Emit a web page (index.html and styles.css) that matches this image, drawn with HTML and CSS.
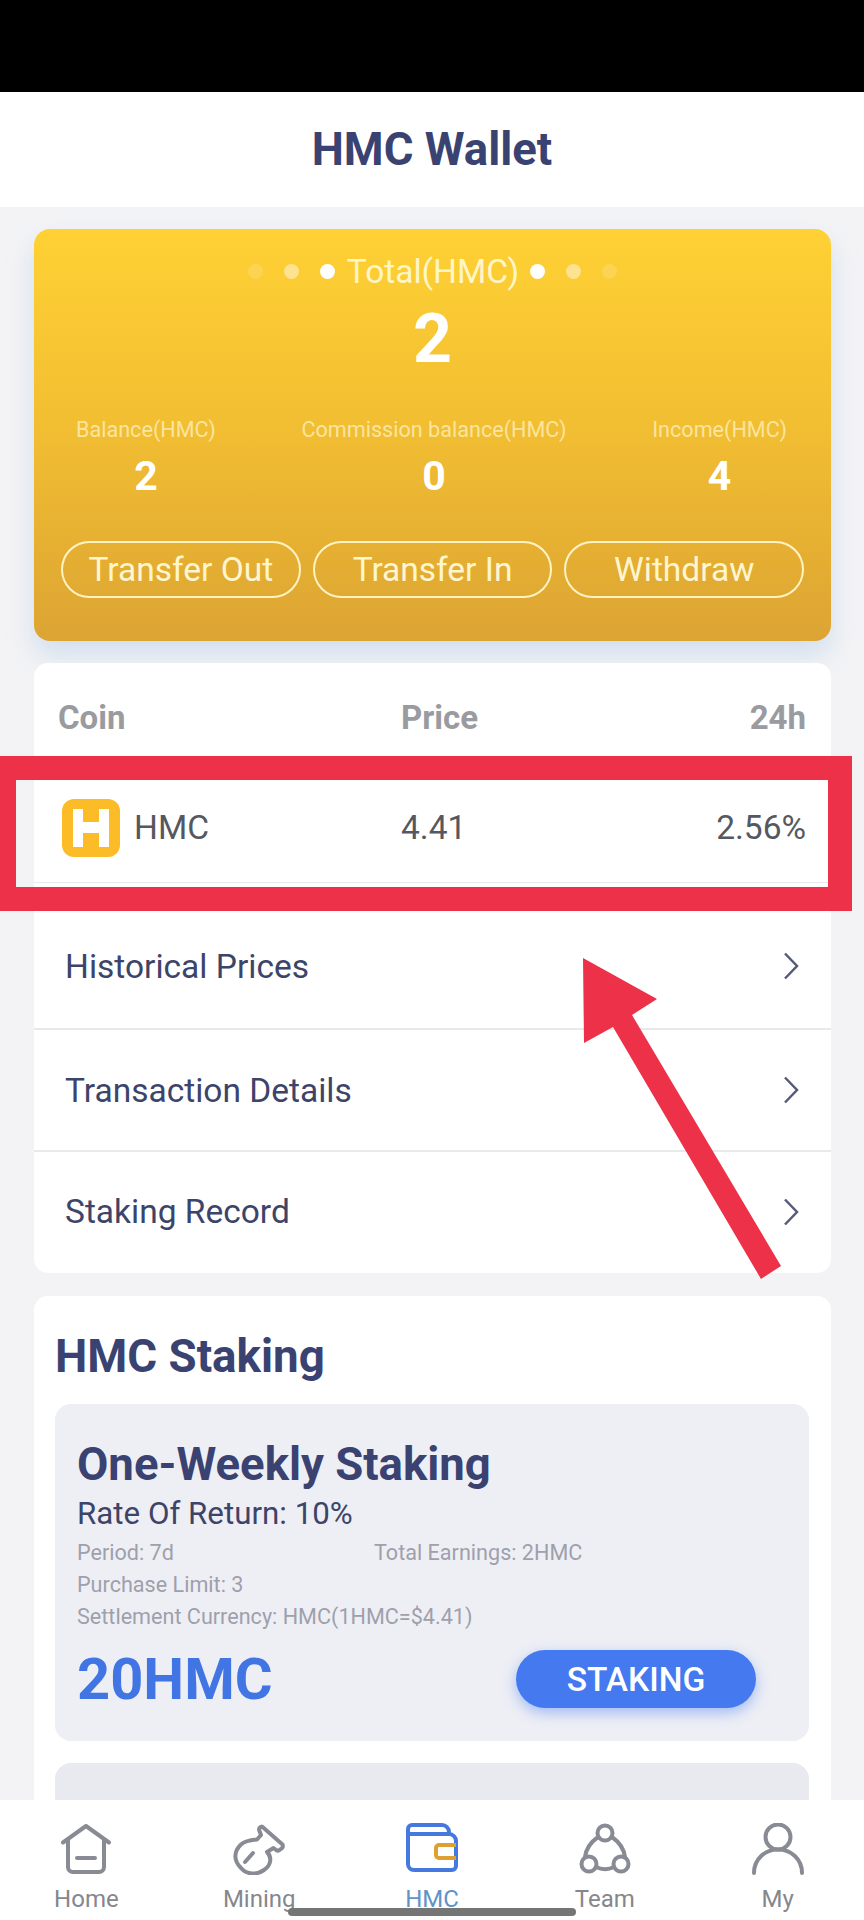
FILE: index.html
```html
<!DOCTYPE html>
<html lang="en">
<head>
<meta charset="utf-8">
<title>HMC Wallet</title>
<link rel="stylesheet" href="styles.css">
</head>
<body>
<div class="app">
  <div class="status"></div>
  <header class="header">HMC Wallet</header>
  <main class="main">
    <section class="gold">
      <div class="total-row">
        <i class="dot d1"></i><i class="dot d2"></i><i class="dot d3"></i>
        <span class="total-label">Total(HMC)</span>
        <i class="dot d3"></i><i class="dot d2"></i><i class="dot d1"></i>
      </div>
      <div class="total-value">2</div>
      <div class="stats">
        <div class="stat"><div class="stat-label">Balance(HMC)</div><div class="stat-value">2</div></div>
        <div class="stat"><div class="stat-label">Commission balance(HMC)</div><div class="stat-value">0</div></div>
        <div class="stat"><div class="stat-label">Income(HMC)</div><div class="stat-value">4</div></div>
      </div>
      <div class="actions">
        <div class="action">Transfer Out</div>
        <div class="action">Transfer In</div>
        <div class="action">Withdraw</div>
      </div>
    </section>

    <section class="card list">
      <div class="coin-head"><span>Coin</span><span>Price</span><span class="right">24h</span></div>
      <div class="coin-row">
        <span class="coin-name">
          <svg class="coin-icon" viewBox="0 0 60 60"><rect x="1" y="1" width="58" height="58" rx="12" fill="#fcbc28"/><path d="M12 11h10v13h16V11h10v38H38V35H22v14H12z" fill="#fff"/></svg>
          HMC
        </span>
        <span>4.41</span>
        <span class="right">2.56%</span>
      </div>
      <div class="menu-row">Historical Prices<svg class="chev" viewBox="0 0 16 28"><path d="M2 1.5 14 14 2 26.500" /></svg></div>
      <div class="menu-row">Transaction Details<svg class="chev" viewBox="0 0 16 28"><path d="M2 1.5 14 14 2 26.500" /></svg></div>
      <div class="menu-row">Staking Record<svg class="chev" viewBox="0 0 16 28"><path d="M2 1.5 14 14 2 26.500" /></svg></div>
    </section>

    <section class="card staking">
      <h2 class="staking-title">HMC Staking</h2>
      <div class="plan">
        <div class="plan-name">One-Weekly Staking</div>
        <div class="plan-rate">Rate Of Return: 10%</div>
        <div class="plan-meta"><span class="meta-cell">Period: 7d</span><span>Total Earnings: 2HMC</span></div>
        <div class="plan-meta">Purchase Limit: 3</div>
        <div class="plan-meta">Settlement Currency: HMC(1HMC=$4.41)</div>
        <div class="plan-foot">
          <span class="plan-price">20HMC</span>
          <span class="stake-btn">STAKING</span>
        </div>
      </div>
      <div class="plan plan-next"></div>
    </section>
  </main>

  <nav class="nav">
    <div class="tab">
      <svg class="tab-icon" viewBox="0 0 52 52"><path class="ln" d="M3 19.500 26 3l23 16.500M8 17v27a5 5 0 0 0 5 5h26a5 5 0 0 0 5-5V17"/><path class="ln" d="M17 35h18"/></svg>
      <span>Home</span>
    </div>
    <div class="tab">
      <svg class="tab-icon" viewBox="0 0 52 52"><path class="ln" d="M29 3.500 49.500 21.500a3 3 0 0 1-1 4l-2 1.500a3 3 0 0 1-4-.5L40.500 25 34 29C39 34 38.500 42 31 47 24 52 14 52 8 45 1 38 0 29 8 21.500 12 18 18 17 24 16.500L28 12 26.500 8a3 3 0 0 1 2.500-4.500z"/><path class="ln" d="M20 30 12 39"/></svg>
      <span>Mining</span>
    </div>
    <div class="tab active">
      <svg class="tab-icon" viewBox="0 0 52 52"><path class="wl" d="M2 14V6a4 4 0 0 1 4-4h30a7 7 0 0 1 7 7v3M2 11h41a7 7 0 0 1 7 7v25a4 4 0 0 1-4 4H8a6 6 0 0 1-6-6z"/><path class="wg" d="M50 22H33a3 3 0 0 0-3 3v7a3 3 0 0 0 3 3h17"/></svg>
      <span>HMC</span>
    </div>
    <div class="tab">
      <svg class="tab-icon" viewBox="0 0 52 52"><circle class="ln" cx="26" cy="10" r="7.500"/><circle class="ln" cx="10" cy="41" r="7.500"/><circle class="ln" cx="42" cy="41" r="7.500"/><path class="ln" d="M19 14C12 19 7 26 6 34M33 14c7 5 12 12 13 20M17 44c6 3 12 3 18 0"/></svg>
      <span>Team</span>
    </div>
    <div class="tab">
      <svg class="tab-icon" viewBox="0 0 52 52"><circle class="ln" cx="26" cy="14" r="12.500"/><path class="ln" d="M2 50C2 36 13 26.500 26 26.500S50 36 50 50"/></svg>
      <span>My</span>
    </div>
    <div class="home-bar"></div>
  </nav>

  <div class="mark-box"></div>
  <svg class="mark-arrow" viewBox="0 0 864 1920"><path d="M583 958 657 999 632 1015 781 1266 761 1279 613 1027 584 1043z" /></svg>
</div>
</body>
</html>
```
FILE: styles.css
```css
* { box-sizing: border-box; }
html, body { margin: 0; padding: 0; }
body { font-family: Roboto, "Liberation Sans", sans-serif; background: #f3f3f5; }

.app {
  position: relative;
  width: 864px;
  height: 1920px;
  overflow: hidden;
  display: flex;
  flex-direction: column;
}

.status { height: 92px; background: #000; flex: none; }

.header {
  flex: none;
  height: 115px;
  background: #fff;
  display: flex;
  align-items: center;
  justify-content: center;
  font-size: 45.500px;
  font-weight: 700;
  color: #3a4272;
}

.main {
  flex: 1;
  min-height: 0;
  overflow: hidden;
  padding: 22px 33px 0 34px;
  display: flex;
  flex-direction: column;
}

.gold {
  flex: none;
  height: 412px;
  border-radius: 16px;
  background: linear-gradient(180deg, #ffd134 0%, #f1bd32 50%, #dca433 100%);
  box-shadow: 0 14px 26px rgba(150, 185, 230, .35);
  padding: 22px 27px 0 27px;
  color: #fff;
}

.total-row {
  display: flex;
  align-items: center;
  justify-content: center;
  height: 40px;
}
.total-label { font-size: 33.500px; color: #fff6c8; margin: 0 11px 0 12px; }
.dot { width: 15px; height: 15px; border-radius: 50%; background: #fff; flex: none; }
.total-row .dot + .dot { margin-left: 21px; }
.d1 { opacity: .15; }
.d2 { opacity: .45; }

.total-value {
  text-align: center;
  font-size: 68px;
  font-weight: 700;
  line-height: 78px;
  margin-top: 9px;
}

.stats {
  display: flex;
  justify-content: space-between;
  margin: 39px 17px 0 15px;
}
.stat { text-align: center; }
.stat-label { font-size: 21.600px; line-height: 26px; color: #fbe59c; }
.stat-value { font-size: 41px; font-weight: 700; line-height: 46px; margin-top: 10px; }

.actions {
  display: flex;
  gap: 12px;
  margin-top: 42px;
}
.action {
  flex: 1;
  height: 57px;
  border: 2.500px solid #fff3c4;
  border-radius: 29px;
  display: flex;
  align-items: center;
  justify-content: center;
  font-size: 33.500px;
  color: #fff6cf;
}

.card { background: #fff; border-radius: 14px; flex: none; }

.list { height: 610px; margin-top: 22px; }

.coin-head, .coin-row {
  display: grid;
  grid-template-columns: 343px 1fr auto;
  padding: 0 25px 0 24px;
  align-items: center;
}
.coin-head {
  height: 106px;
  padding-top: 2px;
  font-size: 33px;
  font-weight: 700;
  color: #999ba0;
}
.coin-row {
  height: 114px;
  padding-top: 4px;
  font-size: 33.500px;
  color: #555860;
  border-bottom: 1px solid #e8e9ed;
}
.right { justify-self: end; }
.coin-name { display: flex; align-items: center; gap: 13px; margin-left: 3px; }
.coin-icon { width: 60px; height: 60px; flex: none; }

.menu-row {
  height: 122px;
  padding: 0 32px 0 31px;
  display: flex;
  align-items: center;
  justify-content: space-between;
  font-size: 33.500px;
  color: #3d4469;
  border-bottom: 2px solid #e8e9ed;
}
.coin-row + .menu-row { height: 147px; padding-top: 21px; }
.menu-row:last-child { height: 121px; padding-bottom: 2px; border-bottom: 0; }
.chev { width: 16px; height: 28px; fill: none; stroke: #555b78; stroke-width: 2.500; }

.staking { flex: 1; margin-top: 23px; padding: 32px 22px 0 21px; border-radius: 14px 14px 0 0; }
.staking-title { margin: 0; font-size: 45.700px; font-weight: 700; line-height: 58px; color: #3a4272; }
.plan {
  margin-top: 18px;
  height: 337px;
  background: #eeeff5;
  border-radius: 16px;
  padding: 34px 0 0 22px;
  color: #3a4272;
}
.plan-next { margin-top: 22px; height: 200px; background: #e9eaef; }
.plan-name { font-size: 45.500px; font-weight: 700; line-height: 54px; }
.plan-rate { font-size: 31.300px; line-height: 38px; margin-top: 3px; margin-bottom: 4px; color: #3e4468; }
.plan-meta { font-size: 21.600px; line-height: 32px; color: #9ea0ab; }
.meta-cell { display: inline-block; width: 297px; }
.plan-foot {
  display: flex;
  align-items: center;
  justify-content: space-between;
  padding-right: 53px;
  margin-top: 16px;
}
.plan-price { font-size: 57.800px; font-weight: 700; color: #4075e3; line-height: 60px; }
.stake-btn {
  width: 240px;
  height: 58px;
  border-radius: 29px;
  background: #4479f0;
  color: #fff;
  display: flex;
  align-items: center;
  justify-content: center;
  font-size: 33.500px;
  font-weight: 500;
  box-shadow: 0 5px 14px rgba(68, 121, 240, .45);
}

.nav {
  flex: none;
  position: relative;
  height: 120px;
  background: #fff;
  display: grid;
  grid-template-columns: repeat(5, 1fr);
}
.tab {
  display: flex;
  flex-direction: column;
  align-items: center;
  padding-top: 23px;
  font-size: 24px;
  color: #85878d;
}
.tab span { margin-top: 10px; line-height: 28px; }
.tab-icon { width: 52px; height: 52px; display: block; }
.ln { fill: none; stroke: #888b93; stroke-width: 4; stroke-linecap: round; stroke-linejoin: round; }
.wl { fill: none; stroke: #4679e0; stroke-width: 4; stroke-linejoin: round; }
.wg { fill: none; stroke: #dca033; stroke-width: 4; }
.active { color: #5f93c8; }

.home-bar {
  position: absolute;
  left: 288px;
  top: 108px;
  width: 288px;
  height: 8px;
  border-radius: 4px;
  background: #757575;
}

.mark-box {
  position: absolute;
  left: -8px;
  top: 756px;
  width: 860px;
  height: 155px;
  border: 24px solid #ec3148;
  pointer-events: none;
}
.mark-arrow {
  position: absolute;
  left: 0;
  top: 0;
  width: 864px;
  height: 1920px;
  fill: #ec3148;
  pointer-events: none;
}
```
